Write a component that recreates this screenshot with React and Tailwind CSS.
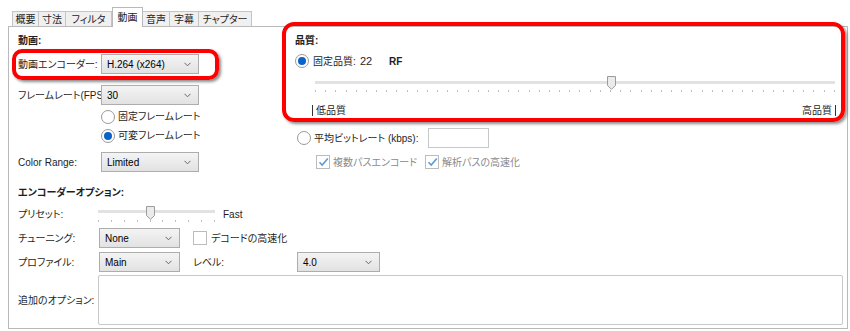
import React from "react";

function Chevron() {
  return (
    <svg width="7" height="5" viewBox="0 0 7 5" className="shrink-0">
      <path d="M0.5 0.8 L3.5 3.8 L6.5 0.8" fill="none" stroke="#666" strokeWidth="1" />
    </svg>
  );
}

function Select({ text, w }) {
  return (
    <div
      className={`flex h-[20px] shrink-0 items-center justify-between border border-[#adadad] bg-linear-to-b from-[#f4f4f4] to-[#e2e2e2] pl-[5px] pr-[7px] text-[10px] text-black ${w}`}
    >
      <span>{text}</span>
      <Chevron />
    </div>
  );
}

function Radio({ checked }) {
  return (
    <div className="flex h-[14px] w-[14px] shrink-0 items-center justify-center rounded-full border border-[#9a9a9a] bg-white">
      {checked && <div className="h-[8px] w-[8px] rounded-full bg-[#0a64c8]" />}
    </div>
  );
}

function Checkbox({ checked }) {
  return (
    <div className="flex h-[14px] w-[14px] shrink-0 items-center justify-center border border-[#bcbcbc] bg-white">
      {checked && (
        <svg width="11" height="10" viewBox="0 0 11 10">
          <path d="M1.5 5.2 L4.2 8 L9.8 1.5" fill="none" stroke="#5b9bd5" strokeWidth="1.6" />
        </svg>
      )}
    </div>
  );
}

function Thumb() {
  return (
    <svg width="9" height="14" viewBox="0 0 9 14">
      <path d="M0.5 0.5 H8.5 V9.5 L4.5 13.3 L0.5 9.5 Z" fill="#ebebeb" stroke="#9c9c9c" strokeWidth="1" />
    </svg>
  );
}

function Slider({ width, ticks, frac, trackTop, tickTop, thumbTop, height }) {
  const arr = Array.from({ length: ticks });
  return (
    <div className="relative shrink-0" style={{ width, height }}>
      <div className="absolute left-0 right-0 h-[3px] bg-[#e2e2e2]" style={{ top: trackTop }} />
      <div className="absolute left-0 right-0 flex justify-between" style={{ top: tickTop }}>
        {arr.map((_, i) => (
          <div key={i} className="h-[2px] w-px bg-[#bdbdbd]" />
        ))}
      </div>
      <div className="absolute" style={{ top: thumbTop, left: Math.round(frac * width) - 4 }}>
        <Thumb />
      </div>
    </div>
  );
}

const tabs = [
  { t: "概要", w: "w-[27px]" },
  { t: "寸法", w: "w-[27px]" },
  { t: "フィルタ", w: "w-[46px]" },
  { t: "動画", w: "w-[31px]", sel: true },
  { t: "音声", w: "w-[27px]" },
  { t: "字幕", w: "w-[29px]" },
  { t: "チャプター", w: "w-[53px]" },
];

export default function App() {
  return (
    <div className="relative h-[331px] w-[850px] overflow-hidden bg-white font-['Liberation_Sans','Noto_Sans_CJK_JP',sans-serif] text-[10px] text-[#1e1e1e] [font-feature-settings:'palt']">
      {/* Tabs */}
      <div className="flex h-[26px] items-end pl-[12px]">
        {tabs.map((tab, i) =>
          tab.sel ? (
            <div
              key={i}
              className={`relative z-10 -mb-px flex h-[20px] items-center justify-center border border-b-0 border-[#b9b9b9] bg-white whitespace-nowrap ${tab.w}`}
            >
              {tab.t}
            </div>
          ) : (
            <div
              key={i}
              className={`flex h-[15px] items-center justify-center border-t border-r border-[#c4c4c4] bg-[#f0f0f0] whitespace-nowrap ${i === 0 ? "border-l" : ""} ${tab.w}`}
            >
              {tab.t}
            </div>
          )
        )}
      </div>

      {/* Panel */}
      <div className="ml-[8px] h-[303px] w-[840px] border border-[#b9b9b9] bg-white">
        <div className="flex">
          {/* Left column */}
          <div className="flex w-[286px] shrink-0 flex-col pl-[9px] pt-[6px]">
            <div className="flex h-[14px] items-center font-bold">動画:</div>
            <div className="mt-[7px] flex h-[20px] items-center">
              <div className="w-[83px] shrink-0 overflow-hidden whitespace-nowrap">動画エンコーダー:</div>
              <Select text="H.264 (x264)" w="w-[98px]" />
            </div>
            <div className="mt-[11px] flex h-[20px] items-center">
              <div className="w-[83px] shrink-0 overflow-hidden whitespace-nowrap">フレームレート(FPS):</div>
              <Select text="30" w="w-[98px]" />
            </div>
            <div className="mt-[2px] flex h-[19px] items-center pl-[83px]">
              <Radio />
              <span className="ml-[3px]">固定フレームレート</span>
            </div>
            <div className="flex h-[19px] items-center pl-[83px]">
              <Radio checked />
              <span className="ml-[3px]">可変フレームレート</span>
            </div>
            <div className="mt-[7px] flex h-[20px] items-center">
              <div className="w-[83px] shrink-0">Color Range:</div>
              <Select text="Limited" w="w-[98px]" />
            </div>
          </div>

          {/* Right column */}
          <div className="flex flex-1 flex-col pt-[6px]">
            <div className="flex h-[14px] items-center font-bold">品質:</div>
            <div className="mt-[7px] flex h-[14px] items-center">
              <Radio checked />
              <span className="ml-[4px] w-[47px]">固定品質:</span>
              <span className="w-[29px] text-[11px]">22</span>
              <span className="font-bold">RF</span>
            </div>
            <div className="ml-[20px] mt-[2px]">
              <Slider width={520} height={24} ticks={52} frac={29 / 51} trackTop={11} tickTop={20} thumbTop={6} />
            </div>
            <div className="ml-[17px] mt-[9px] flex h-[14px] w-[524px] items-center justify-between">
              <span className="flex items-center">
                <span className="mr-[3px] h-[11px] w-px bg-[#333]" />
                低品質
              </span>
              <span className="flex items-center">
                高品質
                <span className="ml-[3px] h-[11px] w-px bg-[#333]" />
              </span>
            </div>
            <div className="mt-[11px] flex h-[20px] items-center">
              <div className="ml-[2px]">
                <Radio />
              </div>
              <span className="ml-[3px] w-[114px]">平均ビットレート (kbps):</span>
              <div className="h-[20px] w-[61px] border border-[#c8c8c8] bg-white" />
            </div>
            <div className="mt-[6px] flex h-[16px] items-center pl-[21px] text-[#8a8a8a]">
              <Checkbox checked />
              <span className="ml-[3px] w-[92px]">複数パスエンコード</span>
              <Checkbox checked />
              <span className="ml-[3px]">解析パスの高速化</span>
            </div>
          </div>
        </div>

        {/* Encoder options */}
        <div className="flex flex-col pl-[9px]">
          <div className="mt-[13px] flex h-[14px] items-center font-bold">エンコーダーオプション:</div>
          <div className="mt-[5px] flex h-[20px] items-center">
            <div className="w-[80px] shrink-0">プリセット:</div>
            <Slider width={117} height={20} ticks={10} frac={4 / 9} trackTop={6} tickTop={16} thumbTop={2} />
            <span className="ml-[8px]">Fast</span>
          </div>
          <div className="mt-[4px] flex h-[20px] items-center">
            <div className="w-[81px] shrink-0">チューニング:</div>
            <Select text="None" w="w-[81px]" />
            <div className="ml-[13px]">
              <Checkbox />
            </div>
            <span className="ml-[4px]">デコードの高速化</span>
          </div>
          <div className="mt-[4px] flex h-[20px] items-center">
            <div className="w-[81px] shrink-0">プロファイル:</div>
            <Select text="Main" w="w-[81px]" />
            <div className="ml-[13px] w-[104px] shrink-0">レベル:</div>
            <Select text="4.0" w="w-[83px]" />
          </div>
          <div className="mt-[3px] flex h-[50px] items-center">
            <div className="w-[80px] shrink-0 whitespace-nowrap">追加のオプション:</div>
            <div className="h-[50px] w-[745px] rounded-[2px] border border-[#c8c8c8] bg-white" />
          </div>
        </div>
      </div>

      {/* Red annotation boxes */}
      <div className="pointer-events-none absolute left-[12px] top-[49px] h-[31px] w-[207px] rounded-[10px] border-[4px] border-[#ff0000] shadow-[2px_2px_3px_rgba(0,0,0,0.45)]" />
      <div className="pointer-events-none absolute left-[282px] top-[22px] h-[100px] w-[563px] rounded-[12px] border-[4px] border-[#ff0000] shadow-[2px_2px_3px_rgba(0,0,0,0.45)]" />
    </div>
  );
}
